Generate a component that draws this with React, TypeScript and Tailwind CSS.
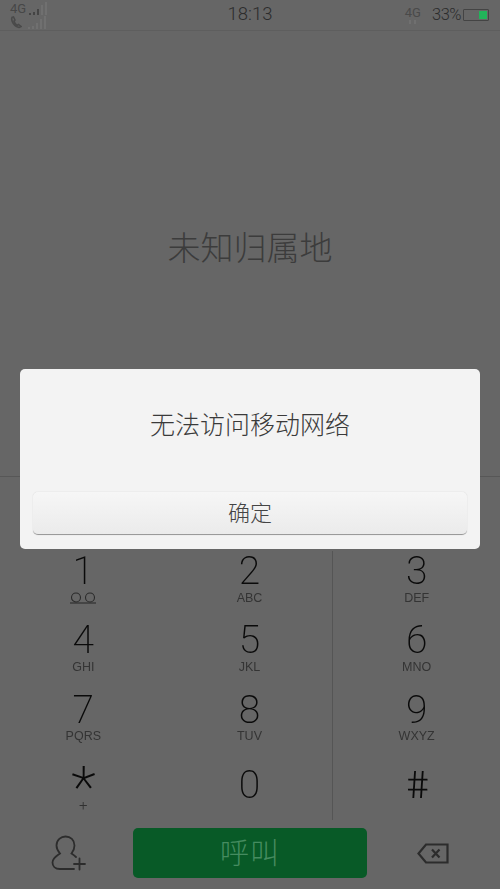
const KEYS = [
  [
    { d: '1', s: 'vm' },
    { d: '2', s: 'ABC' },
    { d: '3', s: 'DEF' },
  ],
  [
    { d: '4', s: 'GHI' },
    { d: '5', s: 'JKL' },
    { d: '6', s: 'MNO' },
  ],
  [
    { d: '7', s: 'PQRS' },
    { d: '8', s: 'TUV' },
    { d: '9', s: 'WXYZ' },
  ],
]

function Bars({ on, className }: { on: number; className?: string }) {
  const heights = [2, 3, 6, 10, 13]
  return (
    <div className={'flex items-end gap-[2px] ' + (className || '')}>
      {heights.map((h, i) => (
        <div
          key={i}
          className={i < on ? 'w-[2px] bg-[#444444]' : 'w-[2px] bg-[#707070]'}
          style={{ height: h }}
        />
      ))}
    </div>
  )
}

function StatusBar() {
  return (
    <div className="relative flex h-[31px] items-center justify-between border-b border-[#5e5e5e] pl-[10px] pr-[11px]">
      <div className="flex w-[45px] flex-col">
        <div className="flex h-[14px] items-center gap-[3px]">
          <span className="text-[13px] leading-none text-[#474747]">4G</span>
          <Bars on={3} />
        </div>
        <div className="flex h-[14px] items-center gap-[6px]">
          <svg width="12" height="13" viewBox="0 0 12 13" fill="none" stroke="#4a4a4a" strokeWidth="1.6">
            <path d="M2 1.5 C1 4 3 10 9 11.5 L11 10.5 L8.5 8.5 L7 9.5 C5.5 8.5 4.5 7 4 5 L5 4 L3.5 1 Z" />
          </svg>
          <Bars on={0} />
        </div>
      </div>
      <span className="absolute left-0 right-0 text-center text-[18.5px] font-light text-[#2c2c2c]">18:13</span>
      <div className="flex items-center">
        <div className="mr-[11px] flex flex-col items-center">
          <span className="text-[13px] leading-[13px] text-[#4a4a4a]">4G</span>
          <div className="mt-[1px] flex gap-[3px]">
            <div className="h-[4px] w-[2px] bg-[#707070]" />
            <div className="h-[4px] w-[2px] bg-[#707070]" />
          </div>
        </div>
        <span className="text-[16.5px] font-light tracking-[-0.5px] text-[#2c2c2c]">33%</span>
        <div className="ml-[2px] flex h-[12px] w-[26px] justify-end rounded-[1px] border border-[#444444] p-[1px]">
          <div className="w-[8px] bg-[#22b35a]" />
        </div>
      </div>
    </div>
  )
}

function Voicemail() {
  return (
    <svg width="28" height="12" viewBox="0 0 28 12" fill="none" stroke="#2a2a2a" strokeWidth="1.1">
      <circle cx="7" cy="5.5" r="4.5" />
      <circle cx="21" cy="5.5" r="4.5" />
      <path d="M1 11 H27" />
    </svg>
  )
}

function Key({ d, s }: { d: string; s: string }) {
  return (
    <div className="flex h-[69px] flex-col items-center">
      <span className="h-[40px] text-[39px] leading-[40px] font-extralight text-[#0a0a0a]">{d}</span>
      <span
        className="flex h-[14px] items-center text-[12.5px] leading-none text-[#343434]"
        style={{ fontFamily: '"Liberation Sans", sans-serif' }}
      >
        {s === 'vm' ? <Voicemail /> : s}
      </span>
    </div>
  )
}

function AddContact() {
  return (
    <svg width="36" height="38" viewBox="0 0 36 38" fill="none" stroke="#2c2c2c" strokeWidth="1.8" strokeLinecap="round">
      <path d="M23 34 H9 C4 34 1.5 31 1.5 27.5 C1.5 23 5.5 21 9 18.5 C6.5 15.5 5.5 13 5.5 10.5 C5.5 5 10 1.5 14.5 1.5 C19.5 1.5 23.5 5 23.5 10.5 C23.5 13 22.5 16 20.5 18.5 C22 19.5 23.5 20.5 25 22" />
      <path d="M23 29 H34 M28.5 23.5 V34.5" />
    </svg>
  )
}

function Backspace() {
  return (
    <svg width="32" height="21" viewBox="0 0 32 21" fill="none" stroke="#2c2c2c" strokeWidth="2.2">
      <path d="M9 1.5 H30.5 V19.5 H9 L1.5 10.5 Z" />
      <path d="M15 6.5 L22.5 14.5 M22.5 6.5 L15 14.5" />
    </svg>
  )
}

export default function App() {
  return (
    <div
      className="relative flex h-[889px] w-[500px] flex-col overflow-hidden bg-[#666666]"
      style={{ fontFamily: 'Roboto, "Noto Sans CJK SC", sans-serif' }}
    >
      <StatusBar />

      <div className="flex h-[445px] justify-center pt-[196px]">
        <span className="text-[33px] leading-[44px] font-light text-[#3c3c3c]">未知归属地</span>
      </div>

      <div className="h-[75px] border-t border-[#575757]" />

      {/* keypad */}
      <div className="grid h-[277px] grid-cols-3 will-change-transform">
        {KEYS.flat().map((k, i) => (
          <div key={k.d} className={i % 3 === 1 ? 'border-r border-[#555555]' : ''}>
            <Key d={k.d} s={k.s} />
          </div>
        ))}
        <div className="flex h-[69px] flex-col items-center">
          <span className="h-[30px] text-[58px] leading-[56px] font-extralight text-[#0a0a0a]">*</span>
          <span className="mt-[9px] text-[15px] leading-none font-light text-[#303030]">+</span>
        </div>
        <div className="h-[61px] border-r border-[#555555]">
          <div className="flex flex-col items-center pt-[6px]">
            <span className="text-[39px] leading-[40px] font-extralight text-[#0a0a0a]">0</span>
          </div>
        </div>
        <div className="flex h-[69px] flex-col items-center pt-[6px]">
          <span className="inline-block skew-x-[7deg] text-[38px] leading-[40px] font-light text-[#0a0a0a]">#</span>
        </div>
      </div>

      {/* bottom bar */}
      <div className="relative flex items-center px-[133px]">
        <div className="absolute left-[51px] top-[7px]">
          <AddContact />
        </div>
        <div className="flex h-[50px] w-[234px] items-center justify-center rounded-[5px] bg-[#085a27] pt-[4px]">
          <span className="text-[29px] font-light tracking-[1px] text-[#468c60]">呼叫</span>
        </div>
        <div className="absolute right-[51px] top-[15px]">
          <Backspace />
        </div>
      </div>

      {/* dialog */}
      <div className="absolute left-[20px] top-[369px] flex h-[180px] w-[460px] flex-col rounded-[5px] bg-[#f3f3f3] px-[13px] pb-[14px]">
        <div className="flex flex-1 items-start justify-center pt-[39px]">
          <span className="text-[25px] leading-[36px] font-light text-[#3a3a3a]">无法访问移动网络</span>
        </div>
        <div className="flex h-[43px] items-center justify-center rounded-[5px] border-b border-b-[#9a9a9a] bg-gradient-to-b from-[#f6f6f6] to-[#ebebeb] shadow-[0_0_1px_#bbbbbb]">
          <span className="text-[22px] font-light text-[#444444]">确定</span>
        </div>
      </div>
    </div>
  )
}
